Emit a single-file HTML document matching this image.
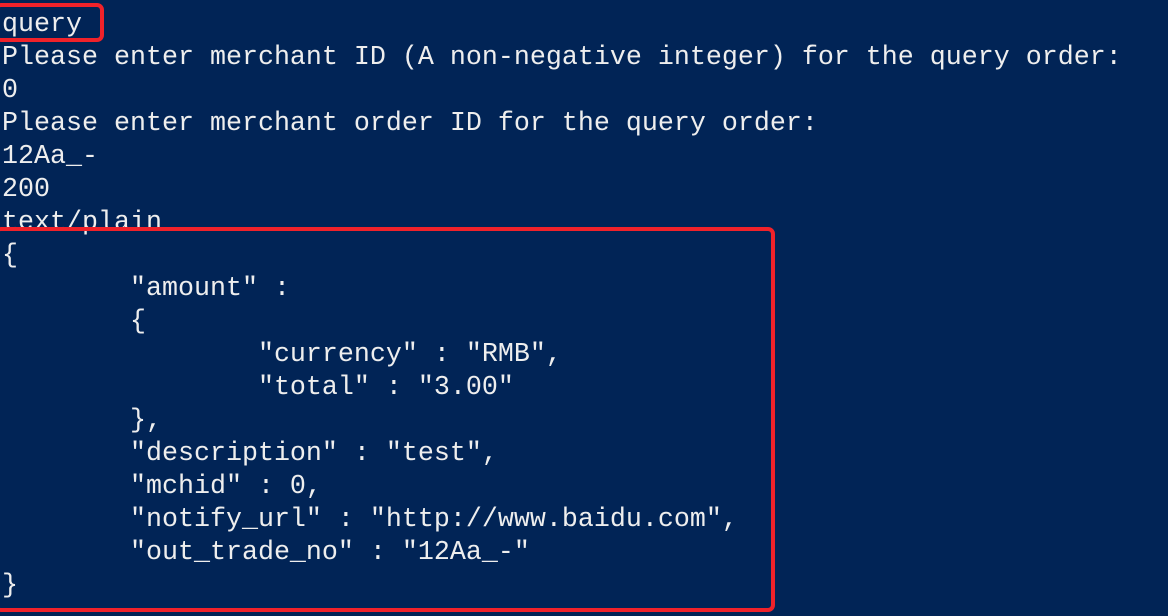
<!DOCTYPE html>
<html><head><meta charset="utf-8"><style>
html,body{margin:0;padding:0;}
body{width:1168px;height:616px;background:#012456;overflow:hidden;position:relative;}
pre{margin:0;position:absolute;left:2px;top:9px;font-family:"Liberation Mono","DejaVu Sans Mono",monospace;font-size:26.67px;line-height:33px;color:#eeeeee;tab-size:8;white-space:pre;}
.box{position:absolute;border:4px solid #f0222a;border-radius:7px;box-sizing:border-box;}
</style></head><body>
<pre>query
Please enter merchant ID (A non-negative integer) for the query order:
0
Please enter merchant order ID for the query order:
12Aa_-
200
text/plain
{
        "amount" :
        {
                "currency" : "RMB",
                "total" : "3.00"
        },
        "description" : "test",
        "mchid" : 0,
        "notify_url" : "http://www.baidu.com",
        "out_trade_no" : "12Aa_-"
}</pre>
<div class="box" style="left:-6px;top:3px;width:110px;height:39px;"></div>
<div class="box" style="left:-6px;top:227px;width:781px;height:385px;"></div>
</body></html>
